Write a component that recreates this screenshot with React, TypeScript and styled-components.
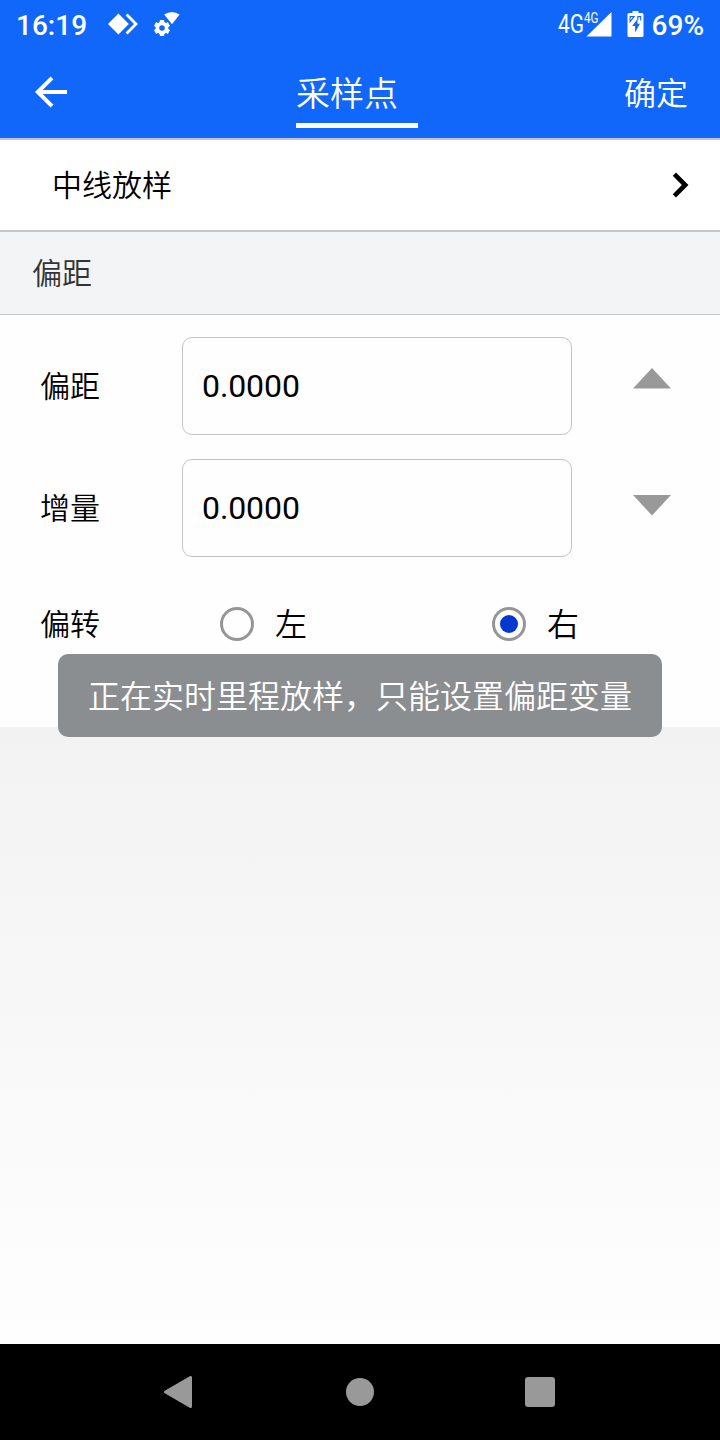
import React from "react";
import styled, { createGlobalStyle } from "styled-components";

const GlobalStyle = createGlobalStyle`
  *, *::before, *::after { box-sizing: border-box; }
  body {
    margin: 0;
    background: #fff;
    font-family: Roboto, "Noto Sans CJK SC DemiLight", "Noto Sans CJK SC", sans-serif;
    font-weight: 350;
  }
  svg { display: block; flex: none; }
`;

const Screen = styled.div`
  position: relative;
  width: 720px;
  height: 1440px;
  display: flex;
  flex-direction: column;
  overflow: hidden;
  background: #fff;
  color: #000;
`;

const StatusBar = styled.div`
  height: 48px;
  display: flex;
  align-items: center;
  justify-content: space-between;
  padding: 2px 16px 0 16px;
  background: #1167f9;
  color: #fff;
`;

const StatusGroup = styled.div`
  display: flex;
  align-items: center;
`;

const StatusText = styled.span`
  padding-top: 2px;
  font-size: 28px;
  line-height: 32px;
  font-weight: 500;
`;

const Clock = styled(StatusText)`
  margin-right: 19px;
`;

const Header = styled.header`
  height: 92px;
  display: grid;
  grid-template-columns: 296px 122px 1fr;
  background: #1167f9;
  border-bottom: 2px solid #c5c6ca;
  color: #fff;
`;

const BackButton = styled.button`
  border: 0;
  padding: 28px 0 0 34px;
  display: flex;
  align-items: flex-start;
  background: none;
  color: inherit;
`;

const TitleTab = styled.div`
  display: flex;
  flex-direction: column;
  justify-content: space-between;
  padding-bottom: 10px;
`;

const Title = styled.h1`
  margin: 0;
  padding-top: 21px;
  font-size: 34px;
  line-height: 50px;
  font-weight: inherit;
  white-space: nowrap;
`;

const Underline = styled.div`
  height: 5px;
  background: #fff;
`;

const ConfirmButton = styled.button`
  border: 0;
  padding: 23px 32px 0 0;
  background: none;
  color: inherit;
  font: inherit;
  font-size: 32px;
  line-height: 46px;
  text-align: right;
  align-self: start;
`;

const LinkRow = styled.div`
  height: 92px;
  display: flex;
  align-items: center;
  justify-content: space-between;
  padding: 0 30px 0 52px;
  border-bottom: 2px solid #c5c6ca;
  font-size: 30px;
`;

const LinkText = styled.span`
  padding-bottom: 4px;
`;

const SectionHeader = styled.div`
  height: 83px;
  display: flex;
  align-items: center;
  padding: 0 0 4px 32px;
  background: #f3f4f6;
  border-bottom: 1px solid #c5c6ca;
  color: #333;
  font-size: 30px;
`;

const Panel = styled.section`
  height: 412px;
  padding-top: 22px;
  background: #fefefe;
`;

const FieldRow = styled.div`
  display: grid;
  grid-template-columns: 142px 390px 1fr;
  align-items: center;
  height: 98px;
  margin-bottom: 24px;
  padding-left: 40px;
`;

const Label = styled.span`
  padding-top: 2px;
  font-size: 30px;
  line-height: 44px;
`;

const Field = styled.input`
  width: 390px;
  height: 98px;
  padding: 0 0 0 19px;
  border: 1px solid #c4c4c4;
  border-radius: 10px;
  outline: none;
  background: #fefefe;
  color: #000;
  font-family: Roboto, sans-serif;
  font-size: 32px;
  letter-spacing: -0.1px;
`;

const StepButton = styled.button<{ $direction: "up" | "down" }>`
  width: 38px;
  height: 98px;
  margin-left: 61px;
  padding: ${(p) => (p.$direction === "up" ? "31px 0 0" : "36px 0 0")};
  border: 0;
  background: none;
  display: flex;
  align-items: flex-start;
`;

const RadioRow = styled.div`
  display: grid;
  grid-template-columns: 180px 272px 1fr;
  align-items: center;
  height: 86px;
  padding-left: 40px;
`;

const Option = styled.label`
  display: flex;
  align-items: center;
  gap: 21px;
  font-size: 32px;
  line-height: 46px;
`;

const OptionText = styled.span`
  padding-top: 2px;
`;

const Radio = styled.span`
  width: 34px;
  height: 34px;
  display: grid;
  place-items: center;
  border: 3px solid #969696;
  border-radius: 50%;
`;

const RadioDot = styled.span`
  width: 18px;
  height: 18px;
  border-radius: 50%;
  background: #0338d0;
`;

const Backdrop = styled.div`
  flex: 1;
  background: linear-gradient(#f2f2f2, #fefefe);
`;

const Toast = styled.div`
  position: absolute;
  left: 58px;
  top: 654px;
  width: 604px;
  height: 83px;
  display: flex;
  align-items: center;
  justify-content: center;
  padding-bottom: 3px;
  border-radius: 10px;
  background: #8b8e91;
  color: #fff;
  font-size: 32px;
  white-space: nowrap;
`;

const NavBar = styled.nav`
  height: 96px;
  display: flex;
  align-items: center;
  justify-content: center;
  background: #000;
`;

const NavButton = styled.button`
  width: 180px;
  height: 96px;
  padding: 0;
  border: 0;
  display: grid;
  place-items: center;
  background: none;
`;

const teeth = [0, 60, 120, 180, 240, 300];

const StatusIcons = () => (
  <svg width="76" height="28" viewBox="106 11 76 28" fill="#fff">
    <path d="M118.4 13.5 L128.8 24 L118.4 34.5 L108 24 Z" />
    <path d="M126.6 14.6 L136 24 L126.6 33.4" fill="none" stroke="#fff" strokeWidth="2.8" />
    <path d="M164.2 14.6 Q172 9.6 179.6 14.6 L172 24.2 Z" />
    <circle cx="162" cy="28" r="4.6" fill="none" stroke="#fff" strokeWidth="3.6" />
    {teeth.map((angle) => (
      <rect key={angle} x="159.8" y="20" width="4.4" height="3.6" transform={`rotate(${angle} 162 28)`} />
    ))}
  </svg>
);

const SignalIcon = () => (
  <svg width="94" height="32" viewBox="557.5 9 94 32" fill="#fff" fontFamily="Roboto, sans-serif" fontWeight="400">
    <text x="557.5" y="33" fontSize="25" textLength="26" lengthAdjust="spacingAndGlyphs">4G</text>
    <text x="583.5" y="22.7" fontSize="14" textLength="14.5" lengthAdjust="spacingAndGlyphs">4G</text>
    <path d="M611 12 V36.6 H586 Z" />
    <path d="M632 11 H638 V13 H641.5 Q643 13 643 14.5 V35.5 Q643 37 641.5 37 H628.5 Q627 37 627 35.5 V14.5 Q627 13 628.5 13 H632 Z" />
    <path d="M637 19 L631.6 26 H634.6 V32.4 L639.4 23.8 H637 Z" fill="#1167f9" />
    <path d="M629.6 21.6 V16.6 H633.6 Z M637.4 20 V16.6 H640.2 V20.6" fill="none" stroke="#1167f9" strokeWidth="1.1" />
  </svg>
);

const App = () => (
  <>
    <GlobalStyle />
    <Screen>
      <StatusBar>
        <StatusGroup>
          <Clock>16:19</Clock>
          <StatusIcons />
        </StatusGroup>
        <StatusGroup>
          <SignalIcon />
          <StatusText>69%</StatusText>
        </StatusGroup>
      </StatusBar>
      <Header>
        <BackButton aria-label="返回">
          <svg width="34" height="32" viewBox="0 0 34 32" fill="none" stroke="#fff" strokeWidth="4">
            <path d="M18 1.8 L3.8 16 L18 30.2 M3.8 16 H33" />
          </svg>
        </BackButton>
        <TitleTab>
          <Title>采样点</Title>
          <Underline />
        </TitleTab>
        <ConfirmButton>确定</ConfirmButton>
      </Header>
      <LinkRow>
        <LinkText>中线放样</LinkText>
        <svg width="20" height="28" viewBox="0 0 20 28" fill="none" stroke="#000" strokeWidth="4.6">
          <path d="M4.4 3.2 L15.2 14 L4.4 24.8" />
        </svg>
      </LinkRow>
      <SectionHeader>偏距</SectionHeader>
      <Panel>
        <FieldRow>
          <Label>偏距</Label>
          <Field defaultValue="0.0000" />
          <StepButton $direction="up" aria-label="增加">
            <svg width="38" height="21" viewBox="0 0 38 21"><path d="M19 0 L38 20.5 H0 Z" fill="#999" /></svg>
          </StepButton>
        </FieldRow>
        <FieldRow>
          <Label>增量</Label>
          <Field defaultValue="0.0000" />
          <StepButton $direction="down" aria-label="减少">
            <svg width="38" height="21" viewBox="0 0 38 21"><path d="M19 20.5 L38 0 H0 Z" fill="#999" /></svg>
          </StepButton>
        </FieldRow>
        <RadioRow>
          <Label>偏转</Label>
          <Option>
            <Radio />
            <OptionText>左</OptionText>
          </Option>
          <Option>
            <Radio><RadioDot /></Radio>
            <OptionText>右</OptionText>
          </Option>
        </RadioRow>
      </Panel>
      <Backdrop />
      <NavBar>
        <NavButton aria-label="返回">
          <svg width="32" height="32" viewBox="2 0 32 32" fill="#999" stroke="#999" strokeWidth="3" strokeLinejoin="round">
            <path d="M3.5 16 L28.5 1.5 V30.5 Z" />
          </svg>
        </NavButton>
        <NavButton aria-label="主页">
          <svg width="28" height="28" viewBox="0 0 28 28"><circle cx="14" cy="14" r="14" fill="#999" /></svg>
        </NavButton>
        <NavButton aria-label="最近">
          <svg width="30" height="30" viewBox="0 0 30 30"><rect width="30" height="30" rx="3" fill="#999" /></svg>
        </NavButton>
      </NavBar>
      <Toast>正在实时里程放样，只能设置偏距变量</Toast>
    </Screen>
  </>
);

export default App;
